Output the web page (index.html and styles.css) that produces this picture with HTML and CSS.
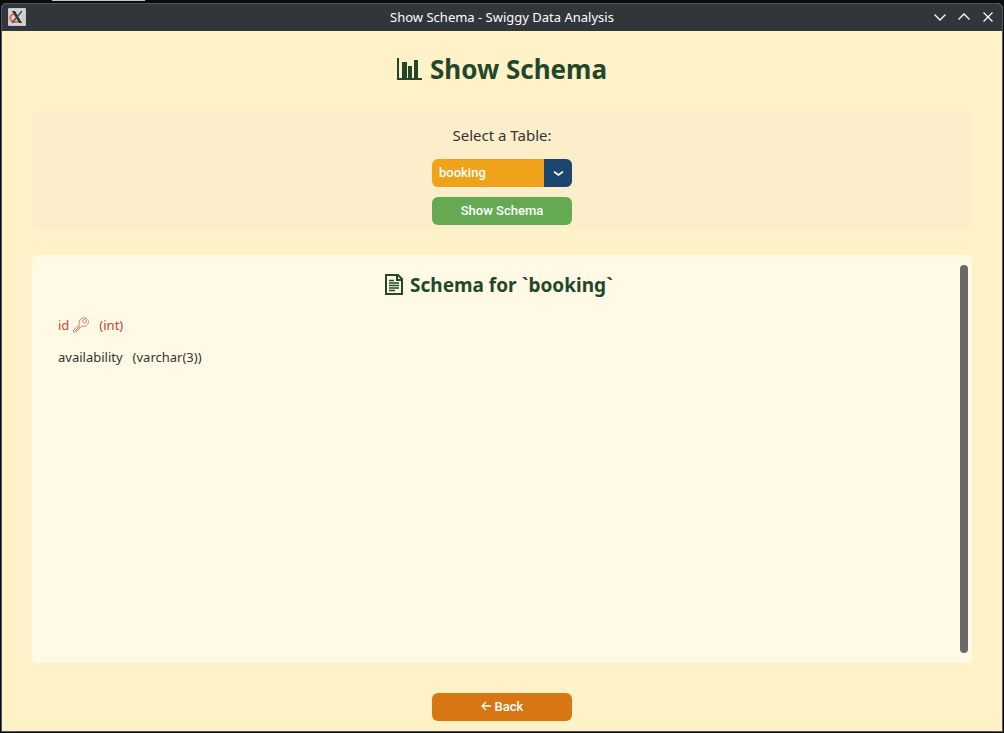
FILE: index.html
```html
<!DOCTYPE html>
<html lang="en">
<head>
<meta charset="utf-8">
<title>Show Schema - Swiggy Data Analysis</title>
<link rel="stylesheet" href="styles.css">
</head>
<body>
<div class="desktop-tab"></div>
<div class="window">
  <header class="titlebar">
    <svg class="app-icon" viewBox="0 0 18 18" aria-hidden="true">
      <rect width="18" height="18" rx="1" fill="#c3c9cc"/>
      <rect x="1" y="1" width="16" height="16" fill="#cfd5d8"/>
      <path d="M6 6C1 7 1 13 6 14h4" fill="none" stroke="#ef693c" stroke-width="2"/>
      <path d="M11 5c6 1 6 7 2 9" fill="none" stroke="#e9bd8d" stroke-width="1.5"/>
      <path d="M4 3h3l7 12h-3z" fill="#2c3033"/>
      <path d="M14 3L4 15" stroke="#42484c" stroke-width="1.3"/>
    </svg>
    <span class="window-title">Show Schema - Swiggy Data Analysis</span>
    <div class="window-controls">
      <button type="button" aria-label="Minimize"><svg viewBox="0 0 12 12"><path d="M.5 3.5L6 9l5.500-5.500"/></svg></button>
      <button type="button" aria-label="Maximize"><svg viewBox="0 0 12 12"><path d="M.5 8.500L6 3l5.500 5.500"/></svg></button>
      <button type="button" aria-label="Close"><svg viewBox="0 0 12 12"><path d="M1.500 1.500l9 9M10.500 1.500l-9 9"/></svg></button>
    </div>
  </header>
  <main class="content">
    <h1 class="page-title">
      <svg class="chart-icon" viewBox="0 0 25 23" aria-hidden="true"><path d="M0 0h2v20h3V4h5v16h1V8h4v12h2V2h4v18h4v2H0z"/></svg>
      Show Schema
    </h1>
    <form class="picker">
      <label class="picker-label" for="table">Select a Table:</label>
      <div class="combo">
        <select id="table" class="combo-select"><option>booking</option></select>
        <svg class="combo-arrow" viewBox="0 0 28 28" aria-hidden="true"><path d="M10.500 13l4 3 4-3"/></svg>
      </div>
      <button type="button" class="button button-show">Show Schema</button>
    </form>
    <section class="schema">
      <div class="schema-body">
        <h2 class="schema-title">
          <svg class="page-icon" viewBox="0 0 18 22" aria-hidden="true">
            <path d="M1 1h12l4 4v15H1zM12 1v5h5" fill="none" stroke="currentColor" stroke-width="2"/>
            <path d="M4 6.500h5M4 9h10M4 11.500h10M4 14h10M4 16.500h6" stroke="currentColor" stroke-width="1.500"/>
          </svg>
          Schema for `booking`
        </h2>
        <ul class="columns">
          <li class="column column-key">
            <span>id</span>
            <svg class="key-icon" viewBox="0 0 16 16" role="img" aria-label="primary key">
              <path d="M6.500 7.500C5 2 9.500.5 12 .8c3 .4 4.500 4 2.500 6.700-1.300 1.800-3.700 2.300-5.500 1.500l-1.500 1.500-1 .2-.3 1.500-1.400.4-.4 1.400L2.500 15.400.5 15v-2z"/>
              <circle cx="11.500" cy="4.300" r="1.800"/>
              <path d="M7 9l-5 5"/>
            </svg>
            <span class="column-type">(int)</span>
          </li>
          <li class="column"><span>availability</span><span class="column-type">(varchar(3))</span></li>
        </ul>
      </div>
      <div class="scrollbar"></div>
    </section>
    <button type="button" class="button button-back"><svg class="back-icon" viewBox="0 0 10 10" aria-hidden="true"><path d="M10 5H1M5 1L1 5l4 4"/></svg>Back</button>
  </main>
</div>
</body>
</html>
```
FILE: styles.css
```css
* { box-sizing: border-box; }

body {
  margin: 0;
  min-height: 100vh;
  padding: 0 1px 1px;
  display: flex;
  flex-direction: column;
  background: #0a0d10;
  font-family: "Noto Sans", sans-serif;
  color: #333;
}

.desktop-tab {
  width: 93px;
  height: 1px;
  margin: 0 0 2px 51px;
  background: #c5c9cb;
}

.window {
  flex: 1;
  display: flex;
  flex-direction: column;
  border: 1px solid #505558;
  border-radius: 5px 5px 0 0;
  overflow: hidden;
  background: #fff2c9;
}

.titlebar {
  height: 27px;
  padding: 0 6px 1px;
  display: grid;
  grid-template-columns: 1fr auto 1fr;
  align-items: center;
  background: #31363b;
  color: #fcfcfc;
}

.app-icon { width: 18px; height: 18px; }

.window-title { font-size: 13px; line-height: 20px; }

.window-controls {
  display: flex;
  justify-content: flex-end;
  gap: 8px;
}

.window-controls button {
  width: 16px;
  height: 16px;
  padding: 2px;
  border: 0;
  background: none;
}

.window-controls svg {
  display: block;
  fill: none;
  stroke: #fcfcfc;
  stroke-width: 1.3;
}

.content {
  flex: 1;
  display: flex;
  flex-direction: column;
  align-items: center;
  padding: 19px 30px 10px;
}

.page-title {
  margin: 0 0 23px;
  display: flex;
  align-items: center;
  gap: 8px;
  font-size: 26px;
  line-height: 38px;
  color: #23472a;
}

.chart-icon { width: 25px; height: 23px; fill: currentColor; }

.picker {
  align-self: stretch;
  display: flex;
  flex-direction: column;
  align-items: center;
  gap: 10px;
  margin-bottom: 26px;
  padding: 10px 0 4px;
  border-radius: 6px;
  background: #fdeecb;
}

.picker-label { padding: 3px 0; font-size: 15px; line-height: 22px; }

.combo {
  display: grid;
  width: 140px;
  height: 28px;
  border-radius: 6px;
  overflow: hidden;
}

.combo-select,
.combo-arrow { grid-area: 1 / 1; }

.combo-select {
  appearance: none;
  padding: 0 28px 2px 7px;
  border: 0;
  background: #f0a31a;
  color: #fff;
  font: 500 13px "Roboto", sans-serif;
}

.combo-arrow {
  justify-self: end;
  width: 28px;
  height: 28px;
  background: #1b4670;
  fill: none;
  stroke: #fff;
  stroke-width: 1.6;
  stroke-linecap: round;
  stroke-linejoin: round;
  pointer-events: none;
}

.button {
  width: 140px;
  height: 28px;
  padding: 0 0 2px;
  display: flex;
  align-items: center;
  justify-content: center;
  gap: 4px;
  border: 0;
  border-radius: 6px;
  color: #fff;
  font: 500 13px "Roboto", sans-serif;
}

.button-show { background: #65aa52; }
.button-back { background: #d87614; }

.back-icon {
  width: 10px;
  height: 10px;
  fill: none;
  stroke: currentColor;
  stroke-width: 1.3;
}

.schema {
  flex: 1;
  align-self: stretch;
  display: flex;
  margin-bottom: 30px;
  padding: 10px 4px 10px 6px;
  border-radius: 6px;
  background: #fff9e5;
}

.schema-body { flex: 1; }

.schema-title {
  margin: 6px 0 13px;
  display: flex;
  align-items: center;
  justify-content: center;
  gap: 7px;
  font-size: 19px;
  line-height: 28px;
  color: #23472a;
}

.page-icon { width: 18px; height: 22px; }

.columns {
  margin: 0;
  padding: 0 20px;
  list-style: none;
}

.column {
  display: flex;
  align-items: center;
  margin-bottom: 6px;
  font-size: 13px;
  line-height: 26px;
}

.column-key { color: #cb4335; }
.column-type { margin-left: 10px; }

.key-icon {
  width: 16px;
  height: 16px;
  margin-left: 4px;
  fill: none;
  stroke: #dd8069;
  stroke-width: 1;
}

.scrollbar {
  width: 8px;
  border-radius: 4px;
  background: #696969;
}
```
